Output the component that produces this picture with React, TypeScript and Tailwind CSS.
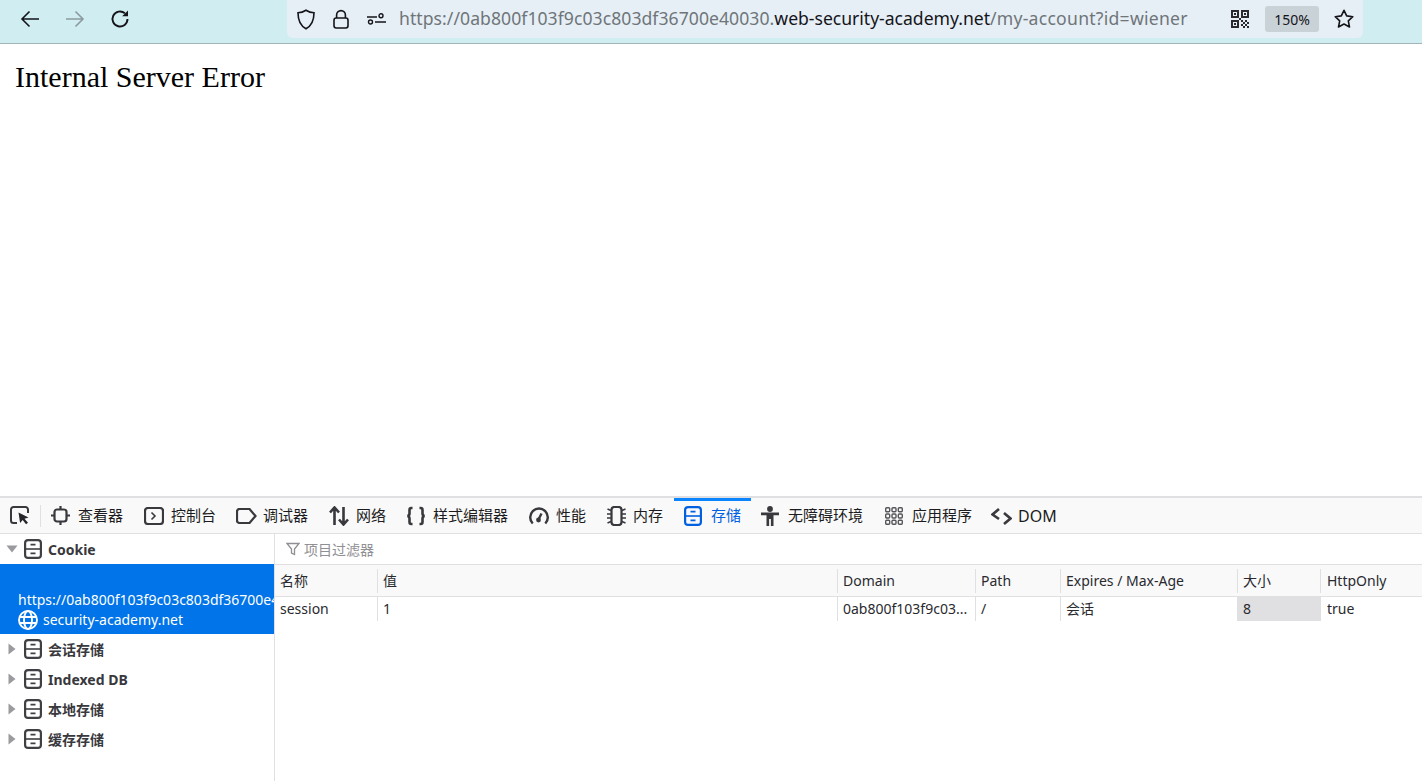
import React from "react";

const sans = "font-['Noto_Sans','Noto_Sans_CJK_SC',sans-serif]";

function Storage({ color = "#3f3f44", size = 18 }: { color?: string; size?: number }) {
  return (
    <svg width={size} height={size + 2} viewBox="0 0 18 20" fill="none" stroke={color} strokeWidth="2.2" className="shrink-0">
      <rect x="1.1" y="1.1" width="15.8" height="17.8" rx="3" />
      <path d="M1 10h16" strokeWidth="1.6" />
      <path d="M6.5 5.6h5M6.5 14.4h5" strokeWidth="1.6" />
    </svg>
  );
}

function Tab({ icon, label, w, active, big }: { icon: React.ReactNode; label: string; w: string; active?: boolean; big?: boolean }) {
  return (
    <div className={`flex h-full shrink-0 items-center pl-[10px] ${w} ${active ? "border-t-[3px] border-[#0a84ff] pb-[3px] text-[#0060df]" : "text-[#1c1c20]"}`}>
      <div className="w-[27px] shrink-0">{icon}</div>
      <span className={`${big ? "text-[16px]" : "text-[15px]"} leading-none whitespace-nowrap`}>{label}</span>
    </div>
  );
}

const ic = { fill: "none", stroke: "#38383d", strokeWidth: 2.2 };

function TreeRow({ label }: { label: string }) {
  return (
    <div className="flex h-[30px] items-center pl-[8px]">
      <svg width="8" height="12" viewBox="0 0 8 12" className="shrink-0"><path d="M0.5 0.5L7.5 6L0.5 11.5Z" fill="#9a9a9f" /></svg>
      <span className="ml-[8px]"><Storage /></span>
      <span className="ml-[6px] text-[14px] font-bold text-[#38383d] whitespace-nowrap">{label}</span>
    </div>
  );
}

function HeadCell({ w, label }: { w: string; label: string }) {
  return (
    <div className={`${w} flex h-[24px] shrink-0 items-center border-r border-[#e0e0e2] pl-[5px] text-[14px] text-[#2a2a2e] whitespace-nowrap`}>{label}</div>
  );
}

function Cell({ w, label, bg }: { w: string; label: string; bg?: string }) {
  return (
    <div className={`${w} ${bg ?? ""} flex h-[24px] shrink-0 items-center overflow-hidden border-r border-[#e0e0e2] pb-[2px] pl-[5px] text-[14px] text-[#2a2a2e] whitespace-nowrap`}>{label}</div>
  );
}

export default function App() {
  return (
    <div className={`flex h-[781px] w-[1422px] flex-col overflow-hidden bg-white ${sans}`}>
      {/* browser bar */}
      <div className="flex h-[44px] shrink-0 items-start border-b border-[#a3b4b8] bg-[#d0eef2]">
        <div className="flex h-[38px] w-[287px] shrink-0 items-center gap-[25px] pl-[20px]">
          <svg width="20" height="20" viewBox="0 0 20 20" fill="none" stroke="#15141a" strokeWidth="1.6"><path d="M19 10H2M9.5 2.5L2 10l7.5 7.5" /></svg>
          <svg width="20" height="20" viewBox="0 0 20 20" fill="none" stroke="#8a9a9e" strokeWidth="1.6"><path d="M1 10h17M10.5 2.5L18 10l-7.5 7.5" /></svg>
          <svg width="20" height="20" viewBox="0 0 20 20" fill="none" stroke="#15141a" strokeWidth="1.9"><path d="M17.5 10a7.5 7.5 0 1 1-2.6-5.7" /><path d="M18 1.5v5.8h-5.8z" fill="#15141a" stroke="none" /></svg>
        </div>
        <div className="flex h-[38px] w-[1076px] shrink-0 items-center rounded-b-[6px] bg-[#e6eff6]">
          <svg width="20" height="21" viewBox="0 0 20 21" fill="none" stroke="#15141a" strokeWidth="1.6" className="ml-[9px]"><path d="M10 1.2c2.6 1.6 5.2 2.4 8 2.6 0 7-1.6 12.6-8 16-6.4-3.4-8-9-8-16 2.8-.2 5.4-1 8-2.6z" /></svg>
          <svg width="16" height="20" viewBox="0 0 16 20" fill="none" stroke="#15141a" strokeWidth="1.6" className="ml-[17px]"><rect x="1" y="9" width="14" height="10" rx="2.2" /><path d="M3.6 9V6a4.4 4.4 0 0 1 8.8 0v3" /></svg>
          <svg width="19" height="12" viewBox="0 0 19 12" fill="none" stroke="#15141a" strokeWidth="1.4" className="ml-[18px]"><circle cx="14" cy="2.8" r="2" /><circle cx="3.5" cy="9" r="2" /><path d="M0 4h10M8 9h11" /></svg>
          <div className="ml-[13px] text-[17.6px] leading-none whitespace-nowrap text-[#6f7579]">
            <span className="tracking-[0.05px]">https://0ab800f103f9c03c803df36700e40030.</span>
            <span className="tracking-[-0.025px] text-[#15141a]">web-security-academy.net</span>
            <span className="tracking-[0.25px]">/my-account?id=wiener</span>
          </div>
          <div className="ml-auto flex items-center">
            <svg width="18" height="18" viewBox="0 0 18 18" className="mr-[16px]">
              <path fill="#2a2a2e" fillRule="evenodd" d="M0 0h8v8H0zM2 2v4h4V2zM10 0h8v8h-8zM12 2v4h4V2zM0 10h8v8H0zM2 12v4h4v-4zM8 8h2v2H8zM10 10h2v2h-2zM14 10h2v2h-2zM12 12h2v2h-2zM16 12h2v2h-2zM10 14h2v2h-2zM14 14h2v2h-2zM12 16h2v2h-2zM16 16h2v2h-2zM3 3h2v2H3zM13 3h2v2h-2zM3 13h2v2H3z" />
            </svg>
            <div className="flex h-[26px] w-[54px] items-center justify-center rounded-[3px] bg-[#c9d2d7] text-[14px] text-[#15141a]">150%</div>
            <svg width="20" height="20" viewBox="0 0 20 20" fill="none" stroke="#15141a" strokeWidth="1.6" className="ml-[15px] mr-[9px]"><path strokeLinejoin="round" d="M10 1.3l2.7 5.6 6.1.8-4.5 4.2 1.2 6.1-5.5-3-5.5 3 1.2-6.1L1.2 7.7l6.1-.8z" /></svg>
          </div>
        </div>
      </div>

      {/* page */}
      <div className="h-[452px] shrink-0 pl-[15px] pt-[15px] font-['Liberation_Serif',serif] text-[30px] leading-[36px] text-black">Internal Server Error</div>

      {/* devtools toolbar */}
      <div className="flex h-[38px] shrink-0 items-stretch border-y border-t-2 border-[#e0e0e2] bg-[#f9f9fa] text-[#1c1c20]">
        <div className="flex w-[41px] shrink-0 items-center justify-center">
          <div className="flex h-[22px] w-full items-center justify-center border-r border-[#e0e0e2]">
            <svg width="20" height="19" viewBox="0 0 20 19" fill="none"><path d="M7 17H3.5A2.5 2.5 0 0 1 1 14.5v-11A2.5 2.5 0 0 1 3.5 1h12A2.5 2.5 0 0 1 18 3.5V7" stroke="#38383d" strokeWidth="2" /><path d="M8.5 6.5l10 5-4 1.2 3.5 4-2 1.5-3.3-4.2-2.6 3z" fill="#26262a" /></svg>
          </div>
        </div>
        <Tab w="w-[93px]" label="查看器" icon={<svg width="19" height="19" viewBox="0 0 19 19" {...ic}><rect x="3.5" y="3.5" width="12" height="12" rx="2.5" /><path d="M9.5 0v3.5M9.5 15.5V19M0 9.5h3.5M15.5 9.5H19" /></svg>} />
        <Tab w="w-[92px]" label="控制台" icon={<svg width="20" height="18" viewBox="0 0 20 18" {...ic}><rect x="1" y="1" width="18" height="16" rx="3" /><path d="M7.5 5.5L11 9l-3.5 3.5" strokeWidth="1.6" /></svg>} />
        <Tab w="w-[93px]" label="调试器" icon={<svg width="21" height="16" viewBox="0 0 21 16" {...ic}><path d="M3.5 1h10l6 7-6 7h-10A2.5 2.5 0 0 1 1 12.5v-9A2.5 2.5 0 0 1 3.5 1z" /></svg>} />
        <Tab w="w-[77px]" label="网络" icon={<svg width="20" height="20" viewBox="0 0 20 20" {...ic} strokeWidth="2.6"><path d="M5.5 19V2M1 6.5l4.5-5 4.5 5M14.5 1v17M10 13.5l4.500 5 4.500-5" /></svg>} />
        <Tab w="w-[123px]" label="样式编辑器" icon={<svg width="20" height="20" viewBox="0 0 20 20" {...ic} strokeWidth="2.6"><path d="M6.5 2H5.3C4 2 3.5 2.8 3.5 4v3.5C3.5 9 2.8 9.700 1.500 10c1.300.3 2 1 2 2.500V16c0 1.200.5 2 1.800 2h1.200M13.500 2h1.200c1.300 0 1.800.8 1.800 2v3.500c0 1.500.7 2.200 2 2.500-1.300.3-2 1-2 2.500V16c0 1.200-.5 2-1.800 2h-1.200" /></svg>} />
        <Tab w="w-[77px]" label="性能" icon={<svg width="20" height="18" viewBox="0 0 20 18" {...ic} strokeWidth="2.4"><path d="M3.700 16.500a8.800 8.800 0 1 1 12.600 0" /><path d="M9.500 12.500l3-6" /><circle cx="9.500" cy="13" r="2.400" fill="#38383d" stroke="none" /></svg>} />
        <Tab w="w-[78px]" label="内存" icon={<svg width="21" height="20" viewBox="0 0 21 20" {...ic}><rect x="5.500" y="1" width="10" height="18" rx="3" /><path d="M5 4.500L1.500 3M5 8H1M5 12H1M5 15.500L1.500 17M16 4.500L19.500 3M16 8h4M16 12h4M16 15.500l3.500 1.500" strokeWidth="1.400" /></svg>} />
        <Tab w="w-[77px]" active label="存储" icon={<Storage color="#0060df" />} />
        <Tab w="w-[124px]" label="无障碍环境" icon={<svg width="18" height="20" viewBox="0 0 18 20"><circle cx="9" cy="3" r="2.900" fill="#38383d" /><path fill="#38383d" d="M0 6.500h18v2.800h-5.500V20H9.900v-7H8.100v7H5.500V9.300H0z" /></svg>} />
        <Tab w="w-[106px]" label="应用程序" icon={<svg width="18" height="18" viewBox="0 0 18 18" fill="none" stroke="#55555a" strokeWidth="1.400"><rect x=".7" y=".7" width="4" height="4" rx="1" /><rect x="7" y=".7" width="4" height="4" rx="1" /><rect x="13.300" y=".7" width="4" height="4" rx="1" /><rect x=".7" y="7" width="4" height="4" rx="1" /><rect x="7" y="7" width="4" height="4" rx="1" /><rect x="13.300" y="7" width="4" height="4" rx="1" /><rect x=".7" y="13.300" width="4" height="4" rx="1" /><rect x="7" y="13.300" width="4" height="4" rx="1" /><rect x="13.300" y="13.300" width="4" height="4" rx="1" /></svg>} />
        <Tab w="w-[86px]" big label="DOM" icon={<svg width="21" height="18" viewBox="0 0 21 18" {...ic} strokeWidth="2.600"><path d="M8 2L1.500 7.500 8 12M13 6l6.500 5.500L13 17" /></svg>} />
      </div>

      {/* devtools body */}
      <div className="flex min-h-0 flex-1">
        <div className="w-[275px] shrink-0 overflow-hidden border-r border-[#e0e0e2]">
          <div className="flex h-[30px] items-center pl-[6px]">
            <svg width="12" height="8" viewBox="0 0 12 8" className="shrink-0"><path d="M0.500 0.500h11L6 7.500z" fill="#9a9a9f" /></svg>
            <span className="ml-[6px]"><Storage /></span>
            <span className="ml-[6px] text-[14px] font-bold text-[#38383d]">Cookie</span>
          </div>
          <div className="flex h-[70px] flex-col justify-end bg-[#0074e8] pb-[4px] pl-[18px] text-[14px] leading-[20px] text-white">
            <div className="overflow-hidden whitespace-nowrap">https://0ab800f103f9c03c803df36700e40030.web-</div>
            <div className="flex items-center gap-[5px] whitespace-nowrap">
              <svg width="20" height="20" viewBox="0 0 20 20" fill="none" stroke="#fff" strokeWidth="1.900"><circle cx="10" cy="10" r="9" /><ellipse cx="10" cy="10" rx="4" ry="9" /><path d="M1.500 7h17M1.500 13h17" /></svg>
              security-academy.net
            </div>
          </div>
          <TreeRow label="会话存储" />
          <TreeRow label="Indexed DB" />
          <TreeRow label="本地存储" />
          <TreeRow label="缓存存储" />
        </div>
        <div className="min-w-0 flex-1">
          <div className="flex h-[31px] items-center gap-[4px] border-b border-[#e0e0e2] pl-[11px] text-[14px] text-[#8f8f94]">
            <svg width="14" height="14" viewBox="0 0 14 14" fill="none" stroke="#8f8f94" strokeWidth="1.300"><path d="M1 1.500h12L8.500 7v5.500l-3-1.500V7z" /></svg>
            项目过滤器
          </div>
          <div className="flex h-[32px] items-center border-b border-[#e0e0e2] bg-[#f9f9fa]">
            <HeadCell w="w-[103px]" label="名称" />
            <HeadCell w="w-[460px]" label="值" />
            <HeadCell w="w-[138px]" label="Domain" />
            <HeadCell w="w-[85px]" label="Path" />
            <HeadCell w="w-[177px]" label="Expires / Max-Age" />
            <HeadCell w="w-[83px]" label="大小" />
            <div className="pl-[6px] text-[14px] text-[#2a2a2e]">HttpOnly</div>
          </div>
          <div className="flex">
            <Cell w="w-[103px]" label="session" />
            <Cell w="w-[460px]" label="1" />
            <Cell w="w-[138px]" label="0ab800f103f9c03..." />
            <Cell w="w-[85px]" label="/" />
            <Cell w="w-[177px]" label="会话" />
            <Cell w="w-[83px]" label="8" bg="bg-[#e0e0e2]" />
            <div className="flex h-[24px] items-center pb-[2px] pl-[6px] text-[14px] text-[#2a2a2e]">true</div>
          </div>
        </div>
      </div>
    </div>
  );
}
